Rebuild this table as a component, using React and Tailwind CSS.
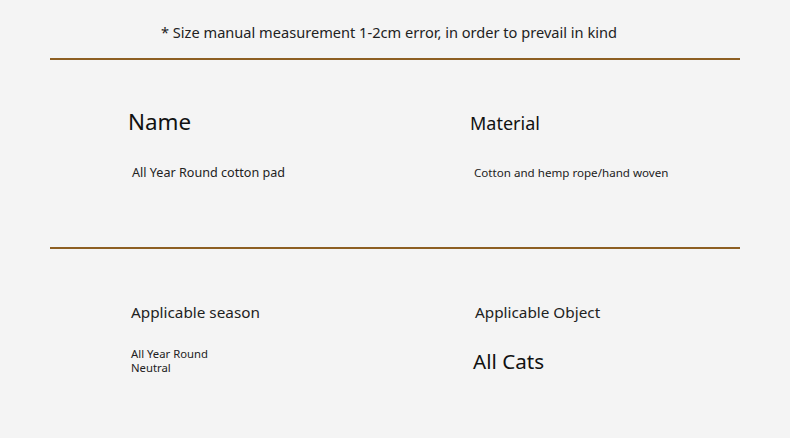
export default function App() {
  return (
    <div className="w-[790px] h-[438px] bg-[#f4f4f4] text-[#1c1c1c] overflow-hidden" style={{ fontFamily: '"Noto Sans", "Open Sans", sans-serif' }}>
      {/* Note */}
      <div className="pt-[22px] pl-[161px] h-[58px]">
        <p className="text-[14.6px] leading-[20px] text-[#222]">* Size manual measurement 1-2cm error, in order to prevail in kind</p>
      </div>
      <div className="mx-[50px] h-[2px] bg-[#8d5f22]" />

      {/* Row 1 */}
      <div className="grid grid-cols-[420px_1fr] h-[187px]">
        <div className="pl-[128px] pt-[48px]">
          <h2 className="text-[22.4px] leading-[28px] text-[#111]">Name</h2>
          <p className="mt-[29px] ml-[4px] text-[12.6px] leading-[16px] text-[#222]">All Year Round cotton pad</p>
        </div>
        <div className="pl-[50px] pt-[51px]">
          <h2 className="text-[18px] leading-[24px] text-[#111]">Material</h2>
          <p className="mt-[30px] ml-[4px] text-[11.6px] leading-[15px] text-[#222]">Cotton and hemp rope/hand woven</p>
        </div>
      </div>
      <div className="mx-[50px] h-[2px] bg-[#8d5f22]" />

      {/* Row 2 */}
      <div className="grid grid-cols-[420px_1fr]">
        <div className="pl-[131px] pt-[53px]">
          <h2 className="text-[15.3px] leading-[20px] text-[#222]">Applicable season</h2>
          <div className="mt-[25px] text-[11.3px] leading-[14px] text-[#222]">
            <p>All Year Round</p>
            <p>Neutral</p>
          </div>
        </div>
        <div className="pl-[55px] pt-[53px]">
          <h2 className="text-[15.3px] leading-[20px] text-[#222]">Applicable Object</h2>
          <p className="mt-[26px] -ml-[2px] text-[20.6px] leading-[26px] text-[#111]">All Cats</p>
        </div>
      </div>
    </div>
  );
}
